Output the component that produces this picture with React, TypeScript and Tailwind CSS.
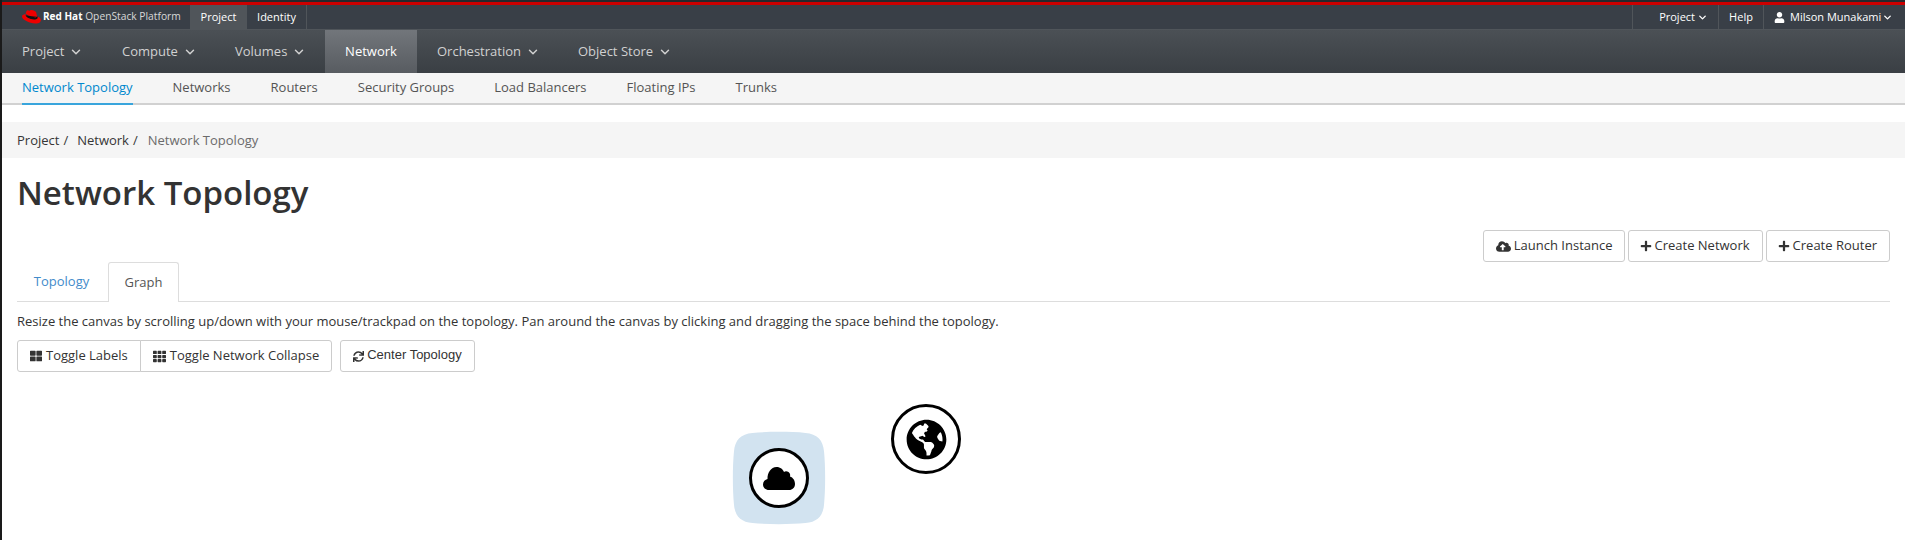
import { FaCloudUploadAlt, FaGlobeAmericas, FaPlus, FaSync, FaTh, FaThLarge, FaUser } from "react-icons/fa";
import { ChevronDown } from "lucide-react";

const mainNav = [
  { label: "Project", w: "w-[100px]" },
  { label: "Compute", w: "w-[113px]" },
  { label: "Volumes", w: "w-[110px]" },
];
const mainNavAfter = [
  { label: "Orchestration", w: "w-[141px]" },
  { label: "Object Store", w: "w-[132px]" },
];
const subNav = ["Networks", "Routers", "Security Groups", "Load Balancers", "Floating IPs", "Trunks"];

function RedHat() {
  return (
    <svg viewBox="0 0 33 24" className="h-[14px] w-[19px] shrink-0">
      <path fill="#111" d="M5 9 L27 11 L28 15 L20 18 L8 13Z" />
      <path fill="#e00" d="M21 13c2 0 5-.3 5-2.800 0-.2 0-.4-.1-.6l-1.200-5.200C24.400 3.300 24.200 2.700 22 1.600 20.300.8 16.700 0 15.600 0c-1 0-1.300 1.300-2.500 1.300S11 .4 9.900.4C8.800.4 8.100 1.100 7.600 2.600c0 0-.9 2.600-1.300 3.800C9 9 15 11 21 11c2 0 5-.5 5-.8z" />
      <path fill="#e00" d="M27 11c.3 1.400.3 1.500.3 1.700 0 2.400-2.700 3.700-6.200 3.700C13.100 16.400 6.300 11.800 6.300 8.700c0-.4.100-.9.300-1.300C3.700 7.500 0 8 0 11.300 0 16.700 12.800 23.300 23 23.300c7.800 0 9.800-3.500 9.800-6.300 0-2.200-1.900-4.700-5.800-6z" />
    </svg>
  );
}

function Btn({ icon, label, className = "" }: { icon: React.ReactNode; label: string; className?: string }) {
  return (
    <div className={`flex h-[32px] items-center border border-[#cccccc] bg-white px-[12px] text-[13px] text-[#333333] ${className}`}>
      {icon}
      <span>{label}</span>
    </div>
  );
}

export default function App() {
  return (
    <div className="flex h-[540px] w-[1905px] overflow-hidden bg-white font-['Open_Sans',sans-serif] text-[#333333]">
      <div className="w-[2px] shrink-0 bg-[#1a1a1a]" />
      <div className="min-w-0 flex-1">
        <div className="h-[2px] bg-[#26292d]" />
        <div className="h-[3px] bg-[#cc0000]" />
        <div className="flex h-[25px] items-stretch border-b border-[#50555a] bg-[#393f47] text-[11px] text-white">
          <div className="flex w-[188px] items-center gap-[2px] pl-[20px]">
            <RedHat />
            <span className="whitespace-nowrap text-[10.250px] text-[#d8d8d8]">
              <span className="text-[10px] font-bold text-white">Red Hat</span> OpenStack Platform
            </span>
          </div>
          <div className="flex w-[57px] items-center justify-center bg-[#50555a]">Project</div>
          <div className="flex w-[60px] items-center justify-center border-r border-[#50555a]">Identity</div>
          <div className="flex-1" />
          <div className="flex w-[86px] items-center justify-end gap-[2px] border-l border-[#50555a] pr-[10px]">
            Project <ChevronDown size={11} strokeWidth={3} />
          </div>
          <div className="flex w-[45px] items-center justify-center border-l border-[#50555a]">Help</div>
          <div className="flex w-[142px] items-center gap-[1px] border-l border-[#50555a] pl-[10px]">
            <FaUser size={11} className="mr-[4px]" /> Milson Munakami <ChevronDown size={11} strokeWidth={3} />
          </div>
        </div>
        <div className="flex h-[43px] items-stretch bg-gradient-to-b from-[#4b5055] to-[#3a3f44] text-[13px] text-[#d1d1d1]">
          {mainNav.map((n) => (
            <div key={n.label} className={`flex ${n.w} items-center gap-[5px] pl-[20px]`}>
              {n.label} <ChevronDown size={14} strokeWidth={2.5} />
            </div>
          ))}
          <div className="flex w-[92px] items-center justify-center bg-gradient-to-b from-[#72767b] to-[#585c61] text-white">Network</div>
          {mainNavAfter.map((n) => (
            <div key={n.label} className={`flex ${n.w} items-center gap-[5px] pl-[20px]`}>
              {n.label} <ChevronDown size={14} strokeWidth={2.5} />
            </div>
          ))}
        </div>
        <div className="flex h-[32px] items-stretch gap-[40px] border-b-2 border-[#d1d1d1] bg-[#f5f5f5] pl-[20px] text-[13px] text-[#545454]">
          <div className="-mb-[2px] flex items-center border-b-2 border-[#39a5dc] text-[#0088ce]">Network Topology</div>
          {subNav.map((s) => (
            <div key={s} className="flex items-center">{s}</div>
          ))}
        </div>
        <div className="mt-[17px] flex h-[36px] items-center gap-[4px] bg-[#f5f5f5] pl-[15px] pt-[2px] text-[13px] text-[#363636]">
          <span>Project</span>
          <span className="mr-[5px]">/</span>
          <span>Network</span>
          <span className="mr-[6px]">/</span>
          <span className="text-[#6b6b6b]">Network Topology</span>
        </div>
        <h1 className="mt-[15px] h-[40px] pl-[15px] text-[33px] font-semibold leading-[40px] text-[#333333]">Network Topology</h1>
        <div className="mt-[17px] flex justify-end gap-[3px] pr-[15px]">
          <Btn className="gap-[3px] rounded-[3px]" icon={<FaCloudUploadAlt size={15} />} label="Launch Instance" />
          <Btn className="gap-[2px] rounded-[3px]" icon={<FaPlus size={12} className="-ml-px" />} label="Create Network" />
          <Btn className="gap-[3px] rounded-[3px]" icon={<FaPlus size={12} className="-ml-px" />} label="Create Router" />
        </div>
        <div className="ml-[15px] mr-[15px] flex h-[40px] items-stretch border-b border-[#dddddd] text-[13px]">
          <div className="flex w-[91px] items-center justify-center pr-[2px] text-[#428bca]">Topology</div>
          <div className="-mb-[1px] flex w-[71px] items-center justify-center rounded-t-[3px] border border-b-0 border-[#dddddd] bg-white text-[#555555]">Graph</div>
        </div>
        <p className="mt-[10px] h-[18px] pl-[15px] text-[13px] leading-[18px]">
          Resize the canvas by scrolling up/down with your mouse/trackpad on the topology. Pan around the canvas by clicking and dragging the space behind the topology.
        </p>
        <div className="ml-[15px] mt-[10px] flex gap-[8px]">
          <div className="flex">
            <Btn className="gap-[4px] rounded-l-[3px]" icon={<FaThLarge size={12} />} label="Toggle Labels" />
            <Btn className="-ml-px gap-[4px] rounded-r-[3px]" icon={<FaTh size={13} />} label="Toggle Network Collapse" />
          </div>
          <div className="flex h-[32px] items-center gap-[3px] rounded-[3px] border border-[#cccccc] bg-white px-[12px] font-['Liberation_Sans',sans-serif] text-[13px]">
            <FaSync size={11} />
            <span className="pb-[2px]">Center Topology</span>
          </div>
        </div>
        <div className="relative">
          <div className="absolute left-[730px] top-[59px] flex h-[94px] w-[94px] items-center justify-center">
            <svg viewBox="-1 -1 96 96" className="absolute inset-0 h-[94px] w-[94px]">
              <path fill="#d2e3f0" d="M20 1C35 -.5 59 -.5 74 1C86 2 92 8 93 20C94.500 35 94.500 59 93 74C92 86 86 92 74 93C59 94.500 35 94.500 20 93C8 92 2 86 1 74C-.5 59 -.5 35 1 20C2 8 8 2 20 1Z" />
            </svg>
            <div className="relative flex h-[60px] w-[60px] items-center justify-center rounded-full border-[3px] border-black bg-white">
              <svg viewBox="0 0 32 23" className="h-[23px] w-[32px]">
                <path fill="#000" d="M6 23C2.500 23 0 20.500 0 17.500C0 14.500 2.200 12.500 4.500 12C4.200 6 8 0 13.500 0C17.500 0 20 2.500 21 5C22 4 24 4 25.500 5C27 6 27.500 8 27 9.500C30 10.500 32 13.500 32 17C32 20.500 29.500 23 26 23Z" />
              </svg>
            </div>
          </div>
          <div className="absolute left-[889px] top-[32px] flex h-[70px] w-[70px] items-center justify-center rounded-full border-[3px] border-black bg-white text-black">
            <FaGlobeAmericas size={41} />
          </div>
        </div>
      </div>
    </div>
  );
}
